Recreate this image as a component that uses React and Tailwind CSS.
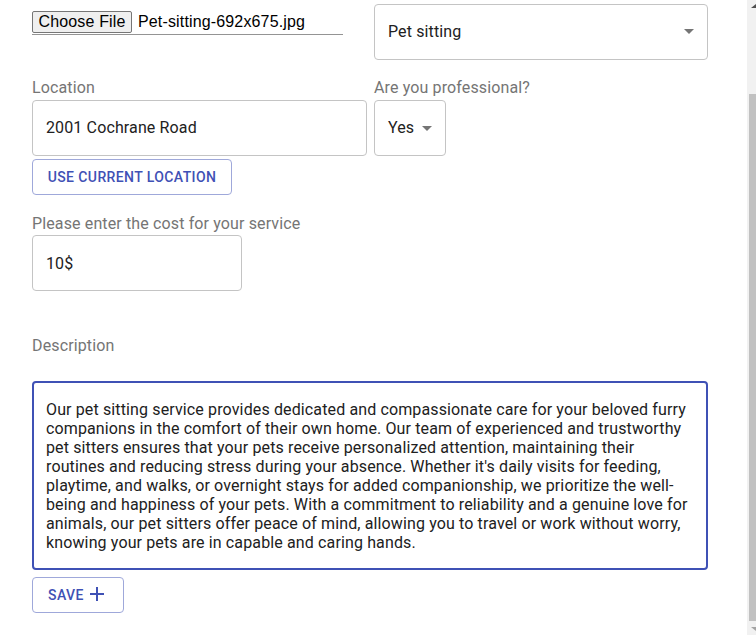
import React from "react";

const lines = [
  "Our pet sitting service provides dedicated and compassionate care for your beloved furry",
  "companions in the comfort of their own home. Our team of experienced and trustworthy",
  "pet sitters ensures that your pets receive personalized attention, maintaining their",
  "routines and reducing stress during your absence. Whether it's daily visits for feeding,",
  "playtime, and walks, or overnight stays for added companionship, we prioritize the well-",
  "being and happiness of your pets. With a commitment to reliability and a genuine love for",
  "animals, our pet sitters offer peace of mind, allowing you to travel or work without worry,",
  "knowing your pets are in capable and caring hands.",
];

function Arrow() {
  return (
    <svg width="24" height="24" viewBox="0 0 24 24" className="shrink-0">
      <path d="M7 10l5 5 5-5z" fill="#757575" />
    </svg>
  );
}

export default function App() {
  return (
    <div className="flex h-[635px] w-[756px] overflow-hidden bg-white font-['Roboto',sans-serif] text-[16px] tracking-[0.13px] text-[#212121]">
      <div className="flex-1 pl-[32px] pr-[39px] pt-[4px]">
        {/* Row 1 */}
        <div className="grid grid-cols-[335px_334px] gap-x-[7px]">
          <div className="pt-[7px]">
            <div className="flex h-[24px] w-[311px] items-start border-b border-[#949494] font-['Liberation_Sans',Arial,sans-serif] text-[16px] tracking-[0.15px] text-black">
              <div className="flex h-[22px] w-[100px] items-center justify-center rounded-[2px] border border-[#767676] bg-[#efefef] leading-none">
                Choose File
              </div>
              <span className="ml-[6px] flex h-[22px] items-center leading-none">Pet-sitting-692x675.jpg</span>
            </div>
          </div>
          <div className="flex h-[56px] items-center justify-between rounded-[4px] border border-[#c4c4c4] pb-[2px] pl-[13px] pr-[6px]">
            <span className="leading-[19px]">Pet sitting</span>
            <Arrow />
          </div>
        </div>

        {/* Row 2 */}
        <div className="mt-[18px] grid grid-cols-[335px_334px] gap-x-[7px]">
          <div>
            <div className="leading-[19px] text-[#757575]">Location</div>
            <div className="mt-[3px] flex h-[56px] items-center rounded-[4px] border border-[#c4c4c4] pb-[1px] pl-[13px]">
              <span className="leading-[19px]">2001 Cochrane Road</span>
            </div>
            <div className="mt-[3px] flex h-[36px] w-[200px] items-center justify-center rounded-[4px] border border-[#9fa8da] text-[14px] font-medium tracking-[0.4px] text-[#3f51b5]">
              USE CURRENT LOCATION
            </div>
          </div>
          <div>
            <div className="leading-[19px] text-[#757575]">Are you professional?</div>
            <div className="mt-[3px] flex h-[56px] w-[72px] items-center justify-between rounded-[4px] border border-[#c4c4c4] pb-[1px] pl-[13px] pr-[6px]">
              <span className="leading-[19px]">Yes</span>
              <Arrow />
            </div>
          </div>
        </div>

        {/* Cost */}
        <div className="mt-[19px] leading-[19px] text-[#757575]">Please enter the cost for your service</div>
        <div className="mt-[2px] flex h-[56px] w-[210px] items-center rounded-[4px] border border-[#c4c4c4] pl-[13px]">
          <span className="leading-[19px]">10$</span>
        </div>

        {/* Description */}
        <div className="mt-[45px] leading-[19px] text-[#757575]">Description</div>
        <div className="mt-[26px] h-[189px] w-[676px] rounded-[4px] border-2 border-[#3f51b5] px-[12px] pt-[17px] leading-[19px]">
          {lines.map((l, i) => (
            <div key={i} className="whitespace-nowrap">{l}</div>
          ))}
        </div>

        <div className="mt-[7px] flex h-[36px] w-[92px] items-center rounded-[4px] border border-[#9fa8da] pl-[15px] text-[14px] font-medium tracking-[0.4px] text-[#3f51b5]">
          <span>SAVE</span>
          <svg width="24" height="24" viewBox="0 0 24 24" className="ml-[1px] -mt-[2px]">
            <path d="M19 13h-6v6h-2v-6H5v-2h6V5h2v6h6v2z" fill="#3f51b5" />
          </svg>
        </div>
      </div>

      {/* Scrollbar */}
      <div className="flex w-[9px] flex-col bg-[#f1f1f1]">
        <div className="flex h-[94px] justify-end pt-[4px]">
          <svg width="5" height="4" viewBox="0 0 5 4">
            <path d="M0 4L5 0L5 4z" fill="#505050" />
          </svg>
        </div>
        <div className="ml-[2px] h-[527px] bg-[#c1c1c1]" />
        <div className="flex flex-1 justify-end pt-[6px]">
          <svg width="5" height="4" viewBox="0 0 5 4">
            <path d="M0 0L5 0L5 4z" fill="#a3a3a3" />
          </svg>
        </div>
      </div>
    </div>
  );
}
